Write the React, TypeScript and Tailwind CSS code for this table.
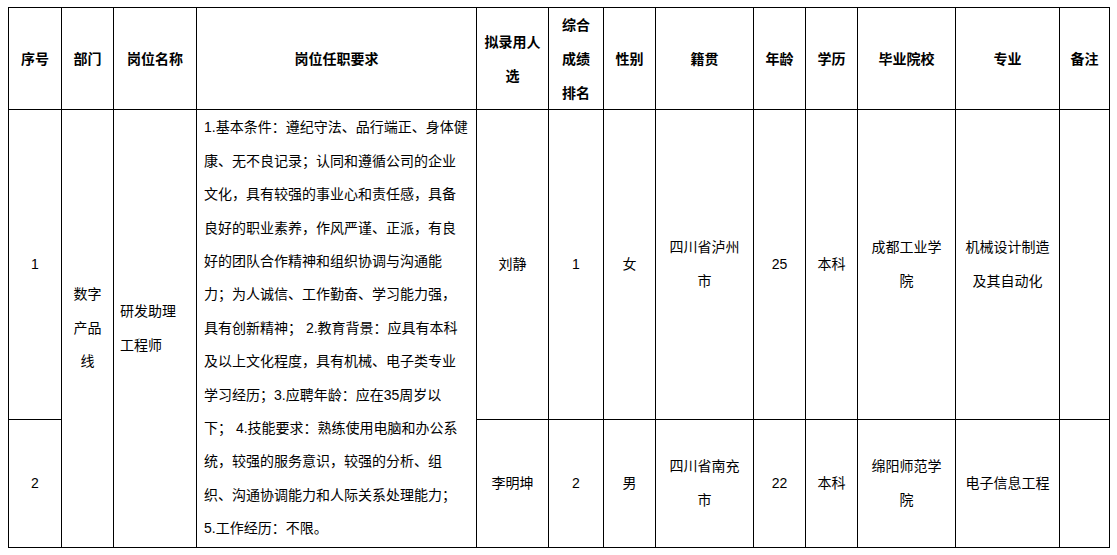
const heads = [
  ['序号'],
  ['部门'],
  ['岗位名称'],
  ['岗位任职要求'],
  ['拟录用人', '选'],
  ['综合', '成绩', '排名'],
  ['性别'],
  ['籍贯'],
  ['年龄'],
  ['学历'],
  ['毕业院校'],
  ['专业'],
  ['备注'],
];

const reqLines = [
  '1.基本条件：遵纪守法、品行端正、身体健',
  '康、无不良记录；认同和遵循公司的企业',
  '文化，具有较强的事业心和责任感，具备',
  '良好的职业素养，作风严谨、正派，有良',
  '好的团队合作精神和组织协调与沟通能',
  '力；为人诚信、工作勤奋、学习能力强，',
  '具有创新精神； 2.教育背景：应具有本科',
  '及以上文化程度，具有机械、电子类专业',
  '学习经历；3.应聘年龄：应在35周岁以',
  '下； 4.技能要求：熟练使用电脑和办公系',
  '统，较强的服务意识，较强的分析、组',
  '织、沟通协调能力和人际关系处理能力；',
  '5.工作经历：不限。',
];

const people = [
  {
    name: '刘静',
    rank: '1',
    sex: '女',
    origin: ['四川省泸州', '市'],
    age: '25',
    edu: '本科',
    school: ['成都工业学', '院'],
    major: ['机械设计制造', '及其自动化'],
  },
  {
    name: '李明坤',
    rank: '2',
    sex: '男',
    origin: ['四川省南充', '市'],
    age: '22',
    edu: '本科',
    school: ['绵阳师范学', '院'],
    major: ['电子信息工程'],
  },
];

function Cell({
  lines,
  className = '',
}: {
  lines: string[];
  className?: string;
}) {
  return (
    <div
      className={`flex flex-col items-center justify-center bg-white text-center ${className}`}
    >
      {lines.map((l, i) => (
        <div key={i} className="whitespace-nowrap">
          {l}
        </div>
      ))}
    </div>
  );
}

export default function App() {
  return (
    <div className="min-h-screen bg-white pl-[8px] pt-[7px] font-['Liberation_Sans','Noto_Sans_CJK_SC',sans-serif] text-[14px] leading-[33.4px] text-black">
      <div className="grid w-max grid-cols-[52px_51px_82px_279px_71px_54px_51px_97px_51px_51px_97px_103px_49px] grid-rows-[101px_309px_127px] gap-px bg-black p-px">
        {heads.map((h, i) => (
          <Cell key={i} lines={h} className="font-bold leading-[34px]" />
        ))}

        <Cell lines={['1']} />
        <Cell lines={['数字', '产品', '线']} className="row-span-2" />
        <div className="row-span-2 flex flex-col justify-center bg-white pl-[6px]">
          <div>研发助理</div>
          <div>工程师</div>
        </div>
        <div className="row-span-2 flex flex-col justify-center bg-white pl-[7px]">
          {reqLines.map((l, i) => (
            <div key={i} className="whitespace-nowrap">
              {l}
            </div>
          ))}
        </div>
        {[people[0]].map((p) => (
          <PersonCells key={p.name} p={p} />
        ))}

        <Cell lines={['2']} />
        {[people[1]].map((p) => (
          <PersonCells key={p.name} p={p} />
        ))}
      </div>
    </div>
  );
}

function PersonCells({ p }: { p: (typeof people)[number] }) {
  return (
    <>
      <Cell lines={[p.name]} />
      <Cell lines={[p.rank]} />
      <Cell lines={[p.sex]} />
      <Cell lines={p.origin} />
      <Cell lines={[p.age]} />
      <Cell lines={[p.edu]} />
      <Cell lines={p.school} />
      <Cell lines={p.major} />
      <Cell lines={['']} />
    </>
  );
}
